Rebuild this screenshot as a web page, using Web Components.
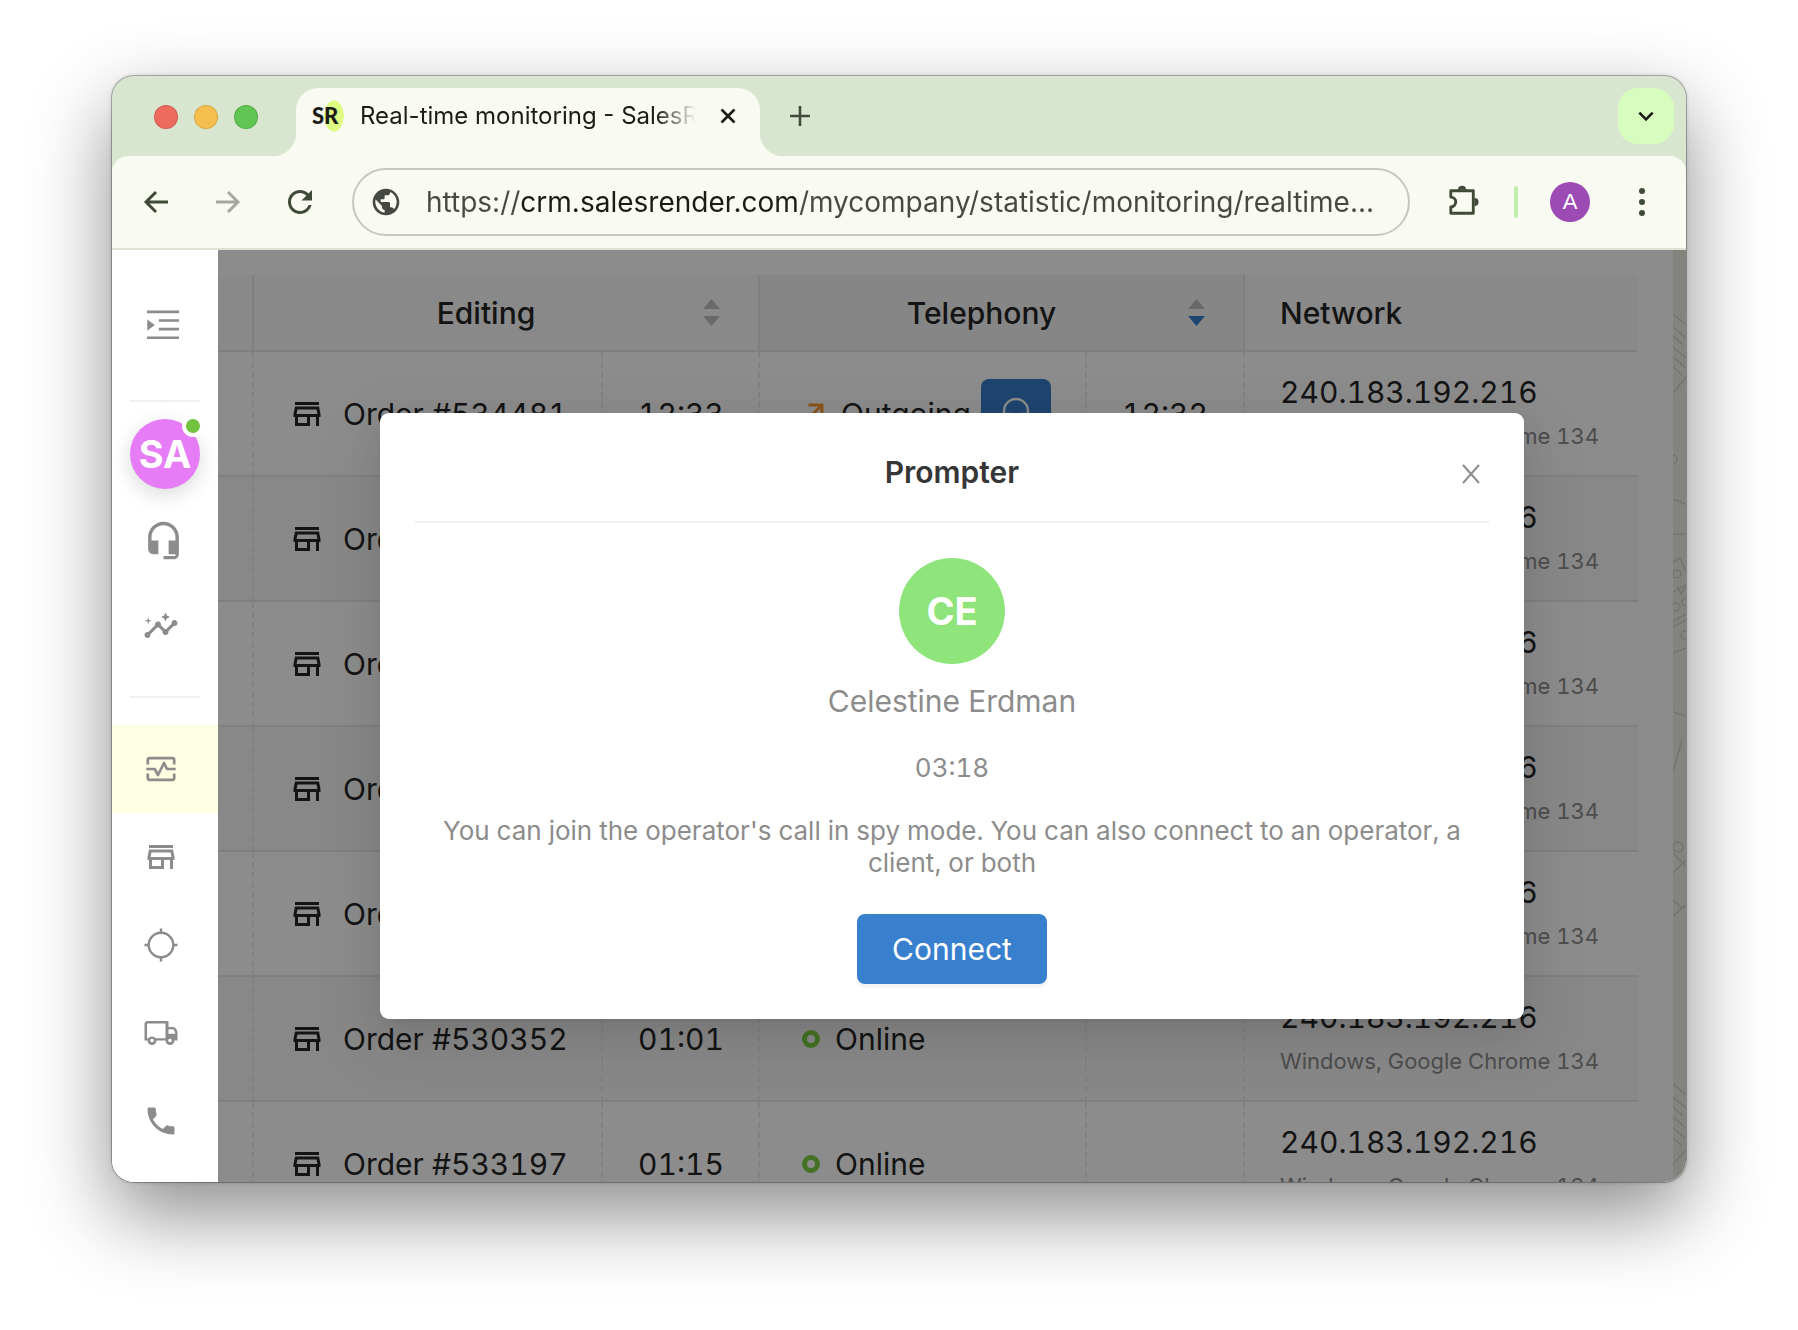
<!DOCTYPE html>
<html lang="en">
	<head>
		<meta charset="utf-8">
		<title>Real-time monitoring - SalesRender</title>
		<style>
			body {
				margin: 0;
				background: #fff;
				color: #262626;
				font-family: Inter, "Liberation Sans", sans-serif;
				font-size: 30px;
				font-variant-numeric: tabular-nums;
			}
		</style>
	</head>
	<body>

		<browser-window>
			<browser-tab slot="tabs">Real-time monitoring - SalesRender</browser-tab>
			<browser-toolbar slot="toolbar" url="https://crm.salesrender.com/mycompany/statistic/monitoring/realtime..."></browser-toolbar>
			<app-shell>
				<app-sidebar slot="sidebar"></app-sidebar>
				<monitor-table></monitor-table>
				<prompter-dialog slot="dialog" initials="CE" name="Celestine Erdman" time="03:18">
					You can join the operator's call in spy mode. You can also connect to an operator, a client, or both
				</prompter-dialog>
			</app-shell>
		</browser-window>

		<script type="module">
			const icons = {
				back: '<path d="M21 12H5M12 4.500L4.500 12l7.500 7.500" fill="none" stroke="currentColor" stroke-width="2.200"/>',
				forward: '<path d="M3 12h16M12 4.500l7.500 7.500-7.500 7.500" fill="none" stroke="currentColor" stroke-width="2.200"/>',
				reload: '<path d="M17.650 6.350C16.200 4.900 14.210 4 12 4c-4.420 0-7.990 3.580-7.990 8s3.570 8 7.990 8c3.730 0 6.840-2.550 7.730-6h-2.080c-.82 2.330-3.040 4-5.650 4-3.310 0-6-2.690-6-6s2.690-6 6-6c1.660 0 3.140.69 4.220 1.780L13 11h7V4l-2.350 2.350z"/>',
				globe: '<path d="M12 2C6.480 2 2 6.480 2 12s4.480 10 10 10 10-4.480 10-10S17.520 2 12 2zm-1 17.930c-3.950-.49-7-3.850-7-7.930 0-.62.08-1.210.21-1.790L9 15v1c0 1.100.9 2 2 2v1.930zm6.900-2.540c-.26-.81-1-1.390-1.900-1.390h-1v-3c0-.55-.45-1-1-1H8v-2h2c.55 0 1-.45 1-1V7h2c1.100 0 2-.9 2-2v-.41c2.930 1.190 5 4.060 5 7.410 0 2.080-.8 3.970-2.100 5.390z" />',
				puzzle: '<path d="M3.200 4.500h15v15h-15v-4.200a3.200 3.200 0 0 0 0-6.600z" fill="none" stroke="currentColor" stroke-width="1.900" stroke-linejoin="round"/><path d="M8 3.800a2.700 2.700 0 0 1 5.400 0zM19 9.300a2.700 2.700 0 0 1 0 5.400z"/>',
				plus: '<path d="M12 5v14M5 12h14" fill="none" stroke="currentColor" stroke-width="1.800"/>',
				cross: '<path d="M5.500 5.500l13 13M18.500 5.500l-13 13" fill="none" stroke="currentColor" stroke-width="2.600"/>',
				thin: '<path d="M4 3l16 18M20 3L4 21" fill="none" stroke="currentColor" stroke-width="2"/>',
				chevron: '<path d="M4 8l8 8 8-8" fill="none" stroke="currentColor" stroke-width="3.200"/>',
				dots: '<circle cx="12" cy="4.700" r="2"/><circle cx="12" cy="12" r="2"/><circle cx="12" cy="19.300" r="2"/>',
				unfold: '<path d="M1.300 2.400h21.400v1.800H1.300zM9.200 8.100h13.500v1.800H9.200zM9.200 13.800h13.500v1.800H9.200zM1.300 19.600h21.400v1.800H1.300zM1.500 8.300L6.600 12l-5.100 3.800z"/>',
				headset: '<path d="M12 1c-4.970 0-9 4.030-9 9v7c0 1.660 1.340 3 3 3h3v-8H5v-2c0-3.870 3.130-7 7-7s7 3.130 7 7v2h-4v8h4v1h-7v2h6c1.660 0 3-1.340 3-3V10c0-4.970-4.030-9-9-9z"/>',
				insights: '<path d="M21 8c-1.450 0-2.260 1.440-1.930 2.510l-3.550 3.560c-.3-.09-.74-.09-1.040 0l-2.550-2.550C12.270 10.450 11.460 9 10 9c-1.450 0-2.270 1.440-1.930 2.520l-4.560 4.550C2.440 15.740 1 16.550 1 18c0 1.100.9 2 2 2 1.450 0 2.260-1.440 1.930-2.510l4.550-4.560c.3.090.74.090 1.040 0l2.550 2.550C12.730 16.550 13.540 18 15 18c1.450 0 2.270-1.440 1.930-2.520l3.560-3.550C21.560 12.260 23 11.450 23 10c0-1.100-.9-2-2-2z"/><path d="M15 9l.94-2.070L18 6l-2.060-.93L15 3l-.92 2.070L12 6l2.080.93zM3.500 11L4 9l2-.5L4 8l-.5-2L3 8l-2 .5L3 9z"/>',
				monitor: '<path d="M3.200 9V6a1.200 1.200 0 0 1 1.200-1.200h15.200A1.200 1.200 0 0 1 20.800 6v3M3.200 15v3a1.200 1.200 0 0 0 1.200 1.200h15.200a1.200 1.200 0 0 0 1.200-1.200v-3M2.200 12h5.600l2.200 4 4-8 2 4h5.800" fill="none" stroke="currentColor" stroke-width="1.800" stroke-linejoin="round"/>',
				store: '<path d="M18.360 9l.6 3H5.040l.6-3h12.720M20 4H4v2h16V4zm0 3H4l-1 5v2h1v6h10v-6h4v6h2v-6h1v-2l-1-5zM6 18v-4h6v4H6z"/>',
				target: '<circle cx="12" cy="12" r="8.200" fill="none" stroke="currentColor" stroke-width="1.600"/><path d="M11.200 1h1.600v3h-1.600zM11.200 20h1.600v3h-1.600zM1 11.200h3v1.600H1zM20 11.200h3v1.600h-3z"/>',
				truck: '<path d="M19.500 8H17V4H3c-1.100 0-2 .9-2 2v11h2c0 1.660 1.340 3 3 3s3-1.340 3-3h6c0 1.660 1.340 3 3 3s3-1.340 3-3h2v-5c0-2.200-1.500-4-3.500-4zM6 18.200a1.200 1.200 0 1 1 0-2.400 1.200 1.200 0 0 1 0 2.400zm9-2.700H8.400C7.800 14.800 7 14.300 6 14.300s-1.800.5-2.400 1.200H2.700V5.600H15v9.900zm3 2.700a1.200 1.200 0 1 1 0-2.400 1.200 1.200 0 0 1 0 2.400zM17 12.500v-3h2.500c1.100 0 1.800 1.400 2 3H17z"/>',
				phone: '<path d="M6.620 10.790c1.440 2.830 3.760 5.140 6.590 6.590l2.200-2.200c.27-.27.67-.36 1.020-.24 1.120.37 2.330.57 3.570.57.55 0 1 .45 1 1V20c0 .55-.45 1-1 1-9.390 0-17-7.610-17-17 0-.55.45-1 1-1h3.500c.55 0 1 .45 1 1 0 1.250.2 2.450.57 3.570.11.35.03.74-.25 1.020l-2.200 2.200z"/>',
				outgoing: '<path d="M9 5v2h6.590L4 18.590 5.410 20 17 8.410V15h2V5z"/>',
				listen: '<path d="M4 14v-4a8 8 0 0 1 16 0v4M4 12h3v7H4zM17 12h3v7h-3z" fill="none" stroke="currentColor" stroke-width="1.600"/>'
			};

			// Registers an element whose shadow root is cloned from the given markup
			function define(name, markup, setup) {
				const tmpl = document.createElement('template');
				tmpl.innerHTML = markup;
				customElements.define(name, class extends HTMLElement {
					constructor() {
						super();
						this.attachShadow({ mode: 'open' }).appendChild(tmpl.content.cloneNode(true));
					}
					connectedCallback() {
						if (setup) setup.call(this, this.shadowRoot);
					}
				});
			}

			define('ui-icon', `
				<style>
					:host { display: inline-flex; flex: none; width: var(--size, 36px); height: var(--size, 36px); }
					svg { width: 100%; height: 100%; fill: currentColor; }
				</style>
				<svg viewBox="0 0 24 24" aria-hidden="true"></svg>
			`, function (root) {
				root.querySelector('svg').innerHTML = icons[this.getAttribute('name')];
			});

			define('user-avatar', `
				<style>
					:host {
						display: flex;
						flex: none;
						align-items: center;
						justify-content: center;
						width: var(--size, 70px);
						height: var(--size, 70px);
						border-radius: 50%;
						background: var(--tint, #e67df7);
						color: #fff;
						font-weight: 700;
						font-size: 38px;
					}
				</style>
				<slot></slot>
			`);

			define('browser-window', `
				<style>
					:host {
						display: flex;
						box-sizing: border-box;
						height: 100vh;
						padding: 76px 112px 148px;
					}
					.window {
						display: flex;
						flex: 1;
						flex-direction: column;
						min-width: 0;
						overflow: hidden;
						border-radius: 22px;
						background: #d9e6cf;
						box-shadow: 0 0 0 1px rgba(0, 0, 0, 0.25), 0 0 4px rgba(0, 0, 0, 0.2), 0 32px 80px rgba(0, 0, 0, 0.46);
					}
					.strip {
						display: flex;
						align-items: flex-start;
						height: 68px;
						padding: 12px 12px 0 42px;
					}
					.lights {
						display: flex;
						gap: 16px;
						padding: 17px 38px 0 0;
					}
					.lights button {
						width: 24px;
						height: 24px;
						padding: 0;
						border: 1px solid rgba(0, 0, 0, 0.12);
						border-radius: 50%;
					}
					.red { background: #ed6a5e; }
					.amber { background: #f5bf4f; }
					.green { background: #61c554; }
					.new, .menu {
						display: flex;
						align-items: center;
						justify-content: center;
						width: 56px;
						height: 56px;
						padding: 0;
						border: 0;
						border-radius: 20px;
						background: none;
						color: #3f4b38;
						--size: 34px;
					}
					.new { margin-left: 12px; }
					.menu { margin-left: auto; background: #d6fcbe; color: #1b1c18; --size: 20px; }
					.bar {
						border-bottom: 2px solid #dee2d4;
						border-radius: 16px 16px 0 0;
						background: #f9faf2;
					}
					main { display: flex; flex: 1; min-height: 0; }
				</style>
				<div class="window">
					<header class="strip">
						<div class="lights">
							<button class="red" aria-label="Close window"></button>
							<button class="amber" aria-label="Minimize"></button>
							<button class="green" aria-label="Zoom"></button>
						</div>
						<slot name="tabs"></slot>
						<button class="new" aria-label="New tab"><ui-icon name="plus"></ui-icon></button>
						<button class="menu" aria-label="Search tabs"><ui-icon name="chevron"></ui-icon></button>
					</header>
					<div class="bar"><slot name="toolbar"></slot></div>
					<main><slot></slot></main>
				</div>
			`);

			define('browser-tab', `
				<style>
					:host {
						position: relative;
						display: flex;
						box-sizing: border-box;
						width: 464px;
						height: 68px;
						padding: 0 16px 12px;
						align-items: center;
						border-radius: 22px 22px 0 0;
						background: #f9faf2;
						color: #1b1c18;
					}
					/* concave feet on both sides of the tab */
					:host::before, :host::after {
						content: "";
						position: absolute;
						bottom: 0;
						width: 24px;
						height: 24px;
					}
					:host::before { right: 100%; background: radial-gradient(circle at 0 0, transparent 24px, #f9faf2 25px); }
					:host::after { left: 100%; background: radial-gradient(circle at 100% 0, transparent 24px, #f9faf2 25px); }
					.logo {
						width: 32px;
						margin-right: 16px;
						background: radial-gradient(ellipse 10px 16px at 22px 50%, #e0fb82 95%, transparent);
						font: 900 22px/32px Lato, sans-serif;
					}
					.title {
						flex: 1;
						min-width: 0;
						padding: 0;
						overflow: hidden;
						border: 0;
						background: none;
						color: inherit;
						font: 400 24px/32px Inter, sans-serif;
						text-align: left;
						white-space: nowrap;
						-webkit-mask-image: linear-gradient(to right, #000 calc(100% - 40px), transparent);
						mask-image: linear-gradient(to right, #000 calc(100% - 40px), transparent);
					}
					.close {
						display: flex;
						margin-left: 16px;
						padding: 4px;
						border: 0;
						background: none;
						color: inherit;
						--size: 24px;
					}
				</style>
				<span class="logo">SR</span>
				<button class="title" role="tab"><slot></slot></button>
				<button class="close" aria-label="Close tab"><ui-icon name="cross"></ui-icon></button>
			`);

			define('browser-toolbar', `
				<style>
					:host {
						display: flex;
						align-items: center;
						height: 92px;
						padding: 0 8px;
						color: #3f4b38;
					}
					button {
						display: flex;
						flex: none;
						align-items: center;
						justify-content: center;
						width: 72px;
						height: 56px;
						padding: 0;
						border: 0;
						background: none;
						color: inherit;
						--size: 32px;
					}
					button:disabled { color: #a5a79f; }
					label {
						display: flex;
						flex: 1;
						align-items: center;
						gap: 24px;
						box-sizing: border-box;
						height: 68px;
						margin: 0 18px 0 16px;
						padding: 0 24px 0 16px;
						border: 2px solid #c5c8bd;
						border-radius: 34px;
						color: #454843;
						--size: 32px;
					}
					input {
						flex: 1;
						min-width: 0;
						padding: 0;
						border: 0;
						outline: 0;
						background: linear-gradient(to right, #454843 94px, #1b1c18 94px 372px, #454843 372px);
						-webkit-background-clip: text;
						background-clip: text;
						color: transparent;
						font: 400 28px/36px Inter, sans-serif;
					}
					hr {
						width: 4px;
						height: 32px;
						margin: 0 16px 0 14px;
						border: 0;
						border-radius: 2px;
						background: #c3efad;
					}
					user-avatar { --size: 40px; --tint: #9c4ab4; font-size: 22px; font-weight: 400; }
				</style>
				<button aria-label="Back"><ui-icon name="back"></ui-icon></button>
				<button aria-label="Forward" disabled><ui-icon name="forward"></ui-icon></button>
				<button aria-label="Reload"><ui-icon name="reload" style="--size: 36px"></ui-icon></button>
				<label>
					<ui-icon name="globe"></ui-icon>
					<input type="text" aria-label="Address">
				</label>
				<button aria-label="Extensions"><ui-icon name="puzzle" style="--size: 36px"></ui-icon></button>
				<hr>
				<button aria-label="Profile"><user-avatar>A</user-avatar></button>
				<button aria-label="Menu"><ui-icon name="dots" style="--size: 36px"></ui-icon></button>
			`, function (root) {
				root.querySelector('input').value = this.getAttribute('url');
			});

			define('app-shell', `
				<style>
					:host { display: flex; flex: 1; min-width: 0; background: #fff; }
					.page { position: relative; display: flex; flex: 1; min-width: 0; overflow: hidden; }
					.content { flex: 1; min-width: 0; padding: 25px 35px 0 0; }
					.map { flex: none; width: 13px; background: #f1f1e6; }
					.mask {
						position: absolute;
						inset: 0;
						display: flex;
						align-items: center;
						justify-content: center;
						background: rgba(0, 0, 0, 0.45);
					}
				</style>
				<slot name="sidebar"></slot>
				<div class="page">
					<div class="content"><slot></slot></div>
					<svg class="map" viewBox="0 0 13 932" preserveAspectRatio="xMidYMin slice" aria-hidden="true">
						<g fill="none" stroke="#d3d3c8" stroke-width="1.500">
							<path d="M0 64l13 11M0 77l13 11M0 86l10 9M0 97l13 11M0 107l13 11M0 117l9 8M0 143l13-16"/>
							<circle cx="0" cy="209" r="4"/>
							<path d="M0 250c5 0 9 2 13 5M0 284h13M0 312l7-4 6 13M0 342l13-7M4 336l4 8 5-8M0 371l13-7M0 377l13-7M0 403l13-5M0 462l13 4"/>
							<circle cx="4" cy="324" r="4"/><circle cx="3" cy="357" r="4"/><circle cx="13" cy="352" r="4"/><circle cx="12" cy="385" r="4"/>
							<path d="M0 522l9-32M0 603l13 13M0 623l13-13M0 650l9 8M0 666l13-11"/>
							<circle cx="5" cy="597" r="5"/>
							<path d="M0 834l13 11M0 847l13 11M0 857l10 9M0 867l13 11M0 878l13 11M0 888l9 8M0 914l13-14"/>
						</g>
					</svg>
					<div class="mask"><slot name="dialog"></slot></div>
				</div>
			`);

			define('side-link', `
				<style>
					:host { display: block; }
					a {
						display: flex;
						align-items: center;
						height: var(--height, 88px);
						padding-left: 31px;
						color: #8c8c8c;
					}
					:host([active]) a { background: #ffffe3; }
				</style>
				<a href="#"></a>
			`, function (root) {
				const link = root.querySelector('a');
				link.setAttribute('aria-label', this.getAttribute('label'));
				link.innerHTML = `<ui-icon name="${this.getAttribute('icon')}"></ui-icon>`;
			});

			define('app-sidebar', `
				<style>
					:host { display: block; flex: none; width: 106px; overflow: hidden; background: #fff; }
					.toggle {
						display: flex;
						align-items: center;
						width: 100%;
						height: 150px;
						padding: 0 0 0 33px;
						border: 0;
						background: none;
						color: #8c8c8c;
					}
					hr { height: 2px; margin: 0 18px; border: 0; background: #f0f0f0; }
					.tools { --height: 86px; padding: 8px 0 27px; }
					.pages { padding-top: 27px; }
					.user { position: relative; width: 70px; margin: 17px 18px 0; }
					user-avatar { box-shadow: 0 6px 20px rgba(0, 0, 0, 0.15); }
					.dot {
						position: absolute;
						top: -4px;
						right: -4px;
						width: 14px;
						height: 14px;
						border: 4px solid #fff;
						border-radius: 50%;
						background: #72c240;
					}
				</style>
				<nav>
					<button class="toggle" aria-label="Expand menu"><ui-icon name="unfold"></ui-icon></button>
					<hr>
					<div class="user"><user-avatar>SA</user-avatar><span class="dot"></span></div>
					<div class="tools">
						<side-link icon="headset" label="Calls" style="--size: 41px"></side-link>
						<side-link icon="insights" label="Insights"></side-link>
					</div>
					<hr>
					<div class="pages">
						<side-link icon="monitor" label="Monitoring" active></side-link>
						<side-link icon="store" label="Orders"></side-link>
						<side-link icon="target" label="Leads"></side-link>
						<side-link icon="truck" label="Delivery"></side-link>
						<side-link icon="phone" label="Telephony"></side-link>
					</div>
				</nav>
			`);

			const rows = [
				{ order: 'Order #534481', edit: '12:33', status: 'Outgoing', call: '12:32' },
				{ order: 'Order' },
				{ order: 'Order' },
				{ order: 'Order' },
				{ order: 'Order' },
				{ order: 'Order #530352', edit: '01:01', status: 'Online' },
				{ order: 'Order #533197', edit: '01:15', status: 'Online' }
			];

			define('monitor-table', `
				<style>
					:host { display: block; }
					table { width: 100%; table-layout: fixed; border-spacing: 0; line-height: 44px; }
					th, td { box-sizing: border-box; border: 0 solid #e8e8e8; border-bottom-width: 2px; text-align: left; white-space: nowrap; }
					th { height: 77px; padding: 0 35px; border-right-width: 2px; background: #fafafa; font-weight: 500; }
					th.sorted { background: #f5f5f5; }
					th:last-child { border-right: 0; border-top-right-radius: 8px; }
					td { height: 125px; padding: 0 0 0 35px; border-right: 2px dashed #ebebeb; }
					td:last-child { border-right: 0; }
					tr:nth-child(even) td { background: #f8f8f8; }
					.head { display: flex; align-items: center; gap: 20px; padding-right: 3px; text-align: center; }
					.head span { flex: 1; }
					.sort {
						display: grid;
						gap: 7px;
						padding: 0;
						border: 0;
						background: none;
					}
					.sort i { width: 17px; height: 10px; background: #bfbfbf; clip-path: polygon(50% 0, 100% 100%, 0 100%); }
					.sort i + i { clip-path: polygon(0 0, 100% 0, 50% 100%); }
					.sorted i + i { background: #387fcd; }
					.cell { display: flex; align-items: center; gap: 18px; }
					.online { gap: 15px; margin-left: 7px; }
					.online i { width: 8px; height: 8px; border: 5px solid #7dcf43; border-radius: 50%; }
					.outgoing { gap: 10px; }
					.outgoing > ui-icon { color: #fa9a32; }
					.outgoing button {
						display: flex;
						align-items: center;
						justify-content: center;
						width: 70px;
						height: 70px;
						padding: 0;
						border: 0;
						border-radius: 8px;
						background: #387fcd;
						color: #fff;
					}
					.agent { color: #8c8c8c; font-size: 22px; }
				</style>
				<table>
					<colgroup>
						<col style="width: 36px"><col style="width: 349px"><col style="width: 157px">
						<col style="width: 327px"><col style="width: 158px"><col>
					</colgroup>
					<thead>
						<tr>
							<th></th>
							<th colspan="2"><div class="head"><span>Editing</span><button class="sort" aria-label="Sort by editing"><i></i><i></i></button></div></th>
							<th colspan="2" class="sorted"><div class="head"><span>Telephony</span><button class="sort" aria-label="Sort by telephony"><i></i><i></i></button></div></th>
							<th>Network</th>
						</tr>
					</thead>
					<tbody></tbody>
				</table>
			`, function (root) {
				const status = {
					Online: '<div class="cell online"><i></i>Online</div>',
					Outgoing: '<div class="cell outgoing"><ui-icon name="outgoing"></ui-icon>Outgoing<button aria-label="Listen"><ui-icon name="listen"></ui-icon></button></div>'
				};
				root.querySelector('tbody').innerHTML = rows.map(row => `
					<tr>
						<td></td>
						<td><div class="cell"><ui-icon name="store"></ui-icon>${row.order}</div></td>
						<td>${row.edit || ''}</td>
						<td>${status[row.status] || ''}</td>
						<td>${row.call || ''}</td>
						<td>240.183.192.216<div class="agent">Windows, Google Chrome 134</div></td>
					</tr>
				`).join('');
			});

			define('prompter-dialog', `
				<style>
					:host {
						display: block;
						box-sizing: border-box;
						width: calc(100% - 324px);
						padding: 0 35px 35px;
						border-radius: 9px;
						background: #fff;
						box-shadow: 0 7px 13px -9px rgba(0, 0, 0, 0.12), 0 13px 35px rgba(0, 0, 0, 0.08), 0 20px 62px 18px rgba(0, 0, 0, 0.05);
						color: #8c8c8c;
						text-align: center;
					}
					header { position: relative; border-bottom: 2px solid #f0f0f0; }
					h2 {
						margin: 0;
						padding: 37px 0 27px;
						color: #363636;
						font-size: 30px;
						font-weight: 600;
						line-height: 44px;
					}
					.close {
						position: absolute;
						top: 43px;
						right: 0;
						display: flex;
						padding: 6px;
						border: 0;
						background: none;
						color: #8c8c8c;
						--size: 24px;
					}
					user-avatar { --size: 106px; --tint: #8fe57b; margin: 35px auto 15px; }
					.name { font-size: 30px; line-height: 44px; }
					.time { margin-top: 24px; font-size: 26px; line-height: 42px; }
					p { margin: 26px 0 35px; font-size: 26px; line-height: 32px; }
					.connect {
						height: 70px;
						padding: 0 35px;
						border: 0;
						border-radius: 8px;
						background: #387fcd;
						box-shadow: 0 4px 0 rgba(0, 0, 0, 0.04);
						color: #fff;
						font: 400 30px/44px Inter, sans-serif;
					}
				</style>
				<header>
					<h2>Prompter</h2>
					<button class="close" aria-label="Close"><ui-icon name="thin"></ui-icon></button>
				</header>
				<user-avatar></user-avatar>
				<div class="name"></div>
				<div class="time"></div>
				<p><slot></slot></p>
				<button class="connect">Connect</button>
			`, function (root) {
				root.querySelector('user-avatar').textContent = this.getAttribute('initials');
				root.querySelector('.name').textContent = this.getAttribute('name');
				root.querySelector('.time').textContent = this.getAttribute('time');
			});
		</script>
	</body>
</html>
